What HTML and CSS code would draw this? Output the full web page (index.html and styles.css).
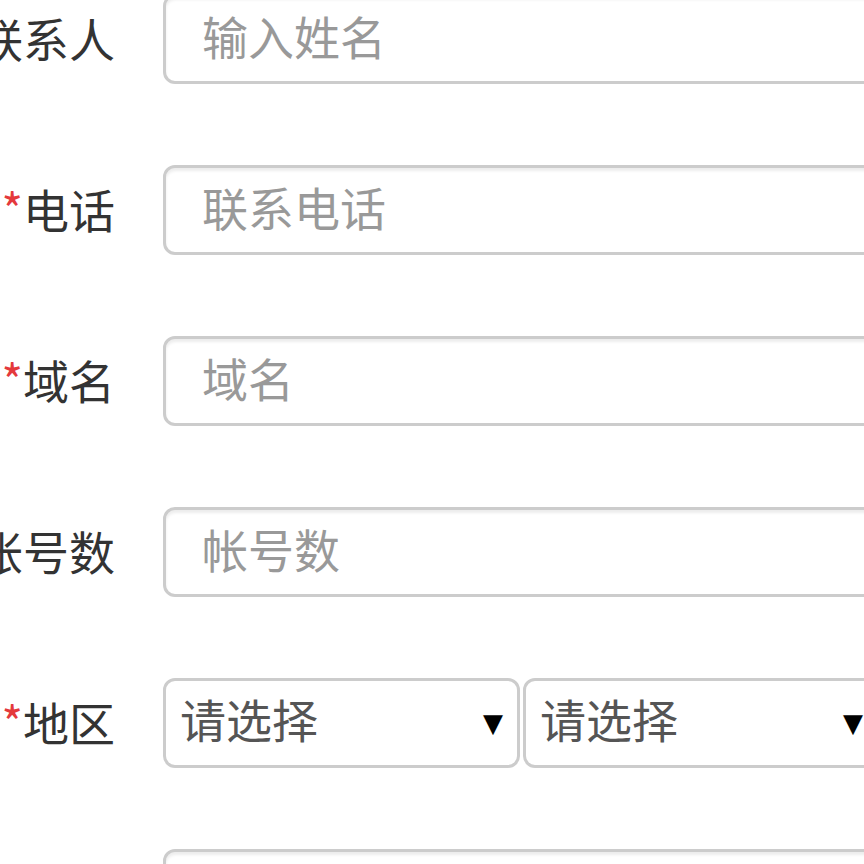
FILE: index.html
```html
<html>
<head>
    <link rel="stylesheet" href="styles.css">
</head>
<body>
    <form class="form">
        <div class="form-row">
            <label class="form-label">联系人</label>
            <input type="text" class="form-input" placeholder="输入姓名">
        </div>
        <div class="form-row">
            <label class="form-label"><span class="required">*</span>电话</label>
            <input type="text" class="form-input" placeholder="联系电话">
        </div>
        <div class="form-row">
            <label class="form-label"><span class="required">*</span>域名</label>
            <input type="text" class="form-input" placeholder="域名">
        </div>
        <div class="form-row">
            <label class="form-label">帐号数</label>
            <input type="text" class="form-input" placeholder="帐号数">
        </div>
        <div class="form-row">
            <label class="form-label"><span class="required">*</span>地区</label>
            <div class="select-group">
                <span class="select-wrap">
                    <select class="form-select">
                        <option>请选择</option>
                    </select>
                </span>
                <span class="select-wrap">
                    <select class="form-select">
                        <option>请选择</option>
                    </select>
                </span>
            </div>
        </div>
        <div class="form-row">
            <label class="form-label"></label>
            <input type="text" class="form-input">
        </div>
    </form>
</body>
</html>
```

FILE: styles.css
```css
body {
    margin: 0;
    overflow: hidden;
    background: #fff;
    font-family: "Noto Sans CJK SC", "Noto Sans", sans-serif;
}

.form {
    width: 1100px;
    margin-top: -6px;
}

.form-row {
    display: flex;
    align-items: center;
    height: 90px;
    margin-bottom: 81px;
}

.form-label {
    flex: 0 0 115px;
    min-width: 0;
    display: flex;
    justify-content: flex-end;
    margin-right: 48px;
    margin-top: -5px;
    font-size: 46px;
    color: #333;
    white-space: nowrap;
}

.required {
    color: #e4393c;
}

.form-input {
    flex: 1;
    height: 90px;
    box-sizing: border-box;
    padding: 0 36px 8px;
    border: 3px solid #ccc;
    border-radius: 12px;
    box-shadow: inset 0 3px 3px rgba(0,0,0,0.075);
    font-family: inherit;
    font-size: 46px;
    color: #555;
    outline: none;
}

.form-input::placeholder {
    color: #999;
}

.select-group {
    display: flex;
    gap: 3px;
}

.select-wrap {
    position: relative;
    display: block;
}

.select-wrap::after {
    content: "▼";
    position: absolute;
    right: 17px;
    top: 50%;
    transform: translateY(-50%);
    font-family: "DejaVu Sans", sans-serif;
    font-size: 26px;
    color: #000;
    pointer-events: none;
}

.form-select {
    appearance: none;
    -webkit-appearance: none;
    width: 357px;
    height: 90px;
    box-sizing: border-box;
    padding: 0 14px 10px;
    border: 3px solid #ccc;
    border-radius: 12px;
    background: #fff;
    font-family: inherit;
    font-size: 46px;
    color: #555;
}
```
